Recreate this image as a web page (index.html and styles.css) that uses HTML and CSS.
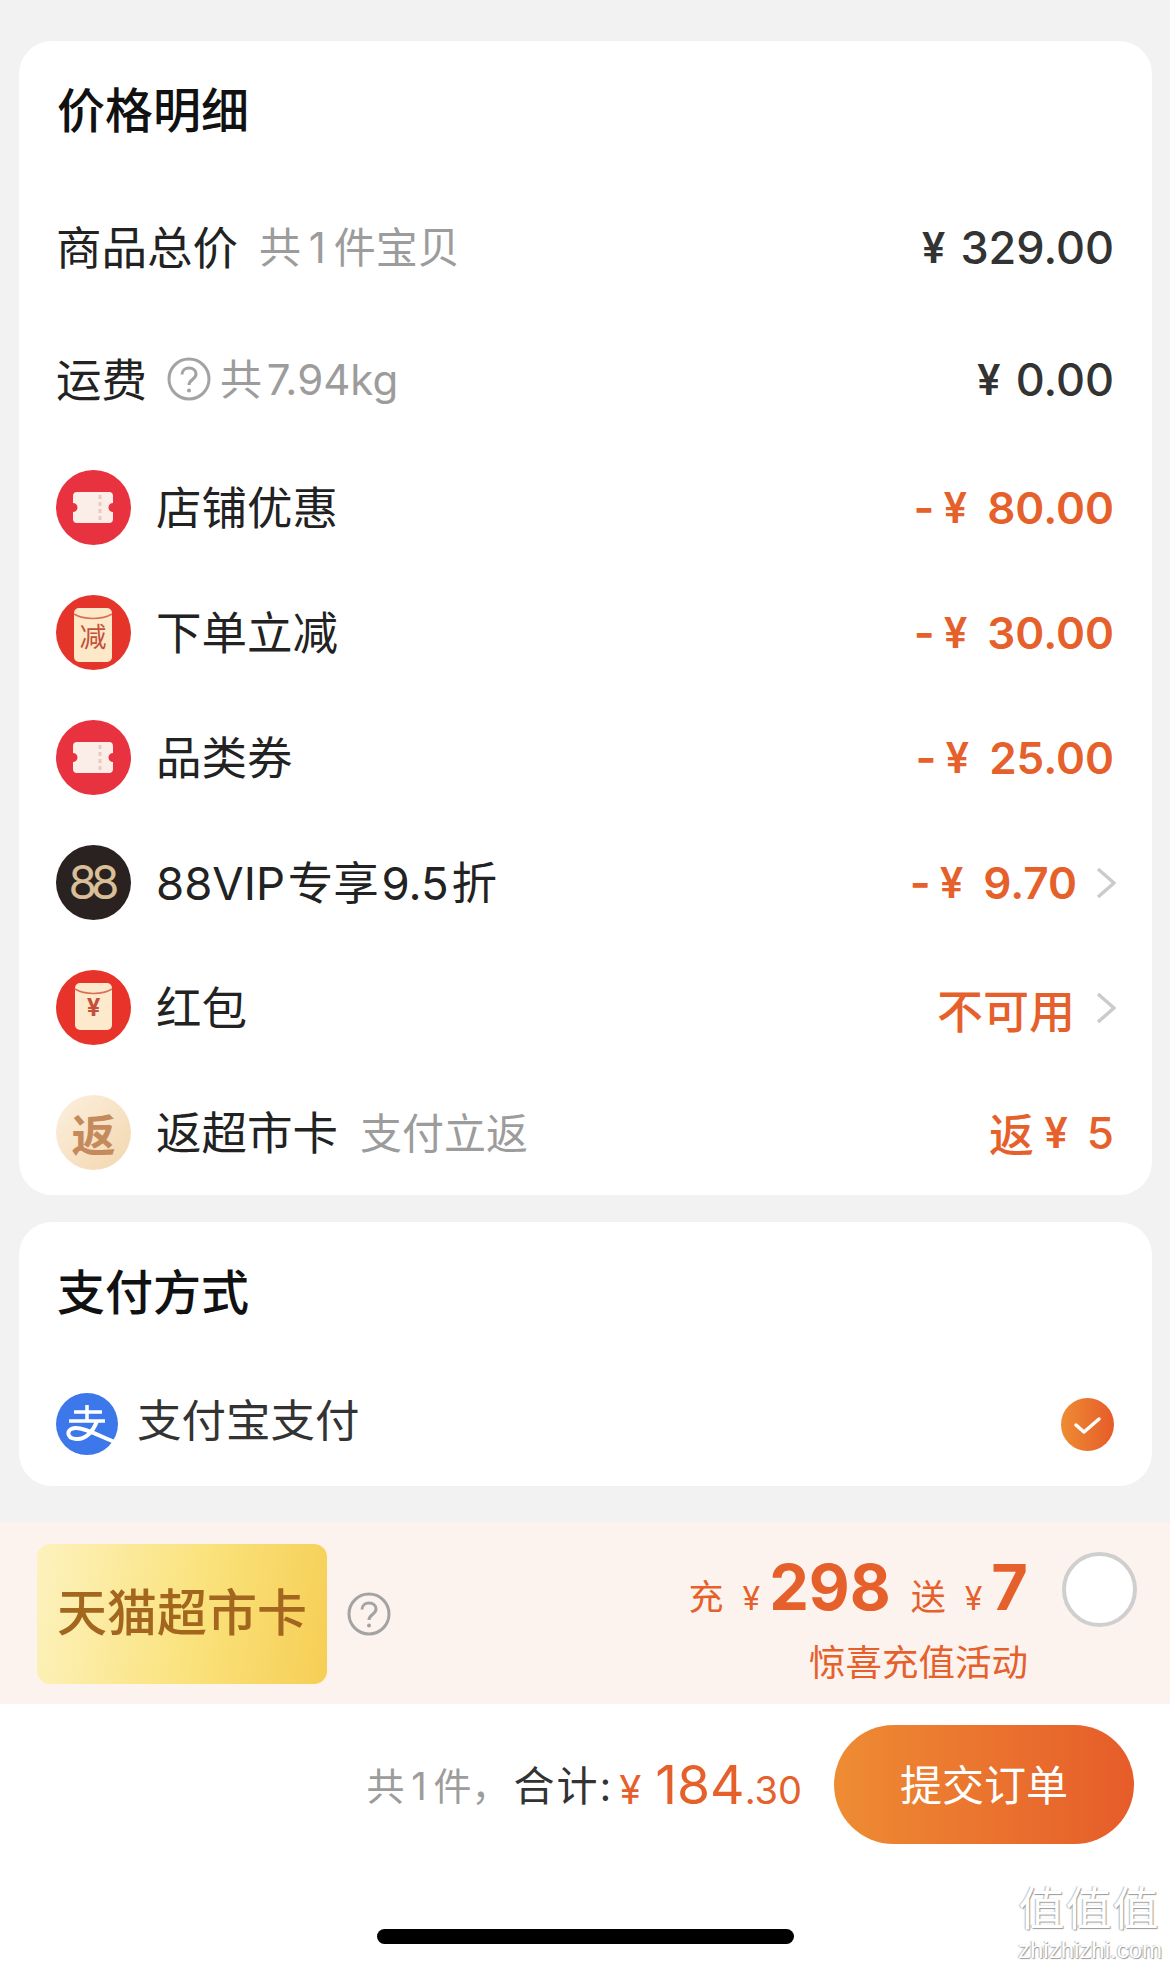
FILE: index.html
```html
<!DOCTYPE html>
<html lang="zh-CN">
<head>
  <meta charset="UTF-8">
  <title>确认订单</title>
  <link rel="stylesheet" href="styles.css">
</head>
<body>

  <section class="card price-card">
    <h2 class="card-title price-title">价格明细</h2>

    <div class="row row-total">
      <div class="row-left">
        <span class="label">商品总价</span>
        <span class="sub sub-total">共 1 件宝贝</span>
      </div>
      <div class="amount"><span class="yen">¥</span>329.00</div>
    </div>

    <div class="row row-fee">
      <div class="row-left">
        <span class="label">运费</span>
        <svg class="help help-fee" viewBox="0 0 44 44">
          <circle cx="22" cy="22" r="20" fill="none" stroke="#a3a3a3" stroke-width="3"/>
          <path d="M15 17.500c0-4 3-6.500 7-6.500s7 2.500 7 6c0 5.500-7 5.500-7 11" fill="none" stroke="#a3a3a3" stroke-width="3"/>
          <circle cx="22" cy="33.500" r="2" fill="#a3a3a3"/>
        </svg>
        <span class="sub sub-fee">共 7.94kg</span>
      </div>
      <div class="amount"><span class="yen">¥</span>0.00</div>
    </div>

    <div class="row">
      <div class="row-left">
        <svg class="icon" viewBox="0 0 75 75">
          <circle cx="37.500" cy="37.500" r="37.500" fill="#e8323f"/>
          <path d="M21 22H53a4 4 0 0 1 4 4V33a4.500 4.500 0 0 0 0 9V49a4 4 0 0 1-4 4H21a4 4 0 0 1-4-4V42a4.500 4.500 0 0 0 0-9V26a4 4 0 0 1 4-4Z" fill="#fbeee8"/>
          <path d="M44 25V51" stroke="#e8cbbd" stroke-width="3" stroke-dasharray="4 3"/>
        </svg>
        <span class="label">店铺优惠</span>
      </div>
      <div class="amount off"><span class="minus">-</span><span class="yen">¥</span><span class="num">80.00</span></div>
    </div>

    <div class="row">
      <div class="row-left">
        <svg class="icon" viewBox="0 0 75 75">
          <circle cx="37.500" cy="37.500" r="37.500" fill="#e5352b"/>
          <rect x="18" y="13" width="38" height="54" rx="5" fill="#fde8c8"/>
          <path d="M18 19c10 6 28 6 38 0" fill="none" stroke="#d9705a" stroke-width="1.500"/>
          <text x="37" y="52" class="icon-char">减</text>
        </svg>
        <span class="label">下单立减</span>
      </div>
      <div class="amount off"><span class="minus">-</span><span class="yen">¥</span><span class="num">30.00</span></div>
    </div>

    <div class="row">
      <div class="row-left">
        <svg class="icon" viewBox="0 0 75 75">
          <circle cx="37.500" cy="37.500" r="37.500" fill="#e8323f"/>
          <path d="M21 22H53a4 4 0 0 1 4 4V33a4.500 4.500 0 0 0 0 9V49a4 4 0 0 1-4 4H21a4 4 0 0 1-4-4V42a4.500 4.500 0 0 0 0-9V26a4 4 0 0 1 4-4Z" fill="#fbeee8"/>
          <path d="M44 25V51" stroke="#e8cbbd" stroke-width="3" stroke-dasharray="4 3"/>
        </svg>
        <span class="label">品类券</span>
      </div>
      <div class="amount off"><span class="minus">-</span><span class="yen">¥</span><span class="num">25.00</span></div>
    </div>

    <div class="row row-arrow">
      <div class="row-left">
        <div class="icon badge-vip">88</div>
        <span class="label label-vip">88VIP 专享 9.5 折</span>
      </div>
      <div class="row-right">
        <div class="amount off"><span class="minus">-</span><span class="yen">¥</span><span class="num">9.70</span></div>
        <svg class="chevron" viewBox="0 0 20 32"><path d="M2 2L18 16L2 30" fill="none" stroke="#cbcbcb" stroke-width="3.500"/></svg>
      </div>
    </div>

    <div class="row row-arrow">
      <div class="row-left">
        <svg class="icon" viewBox="0 0 75 75">
          <circle cx="37.500" cy="37.500" r="37.500" fill="#e8332a"/>
          <rect x="19" y="13" width="37" height="47" rx="5" fill="#fdeacd"/>
          <path d="M19 19c10 6 27 6 37 0" fill="none" stroke="#d9705a" stroke-width="1.500"/>
          <text x="37.500" y="46" class="icon-char icon-yen">¥</text>
        </svg>
        <span class="label">红包</span>
      </div>
      <div class="row-right">
        <div class="amount off text-amount unavailable">不可用</div>
        <svg class="chevron" viewBox="0 0 20 32"><path d="M2 2L18 16L2 30" fill="none" stroke="#cbcbcb" stroke-width="3.500"/></svg>
      </div>
    </div>

    <div class="row">
      <div class="row-left">
        <div class="icon badge-back">返</div>
        <span class="label">返超市卡</span>
        <span class="sub sub-back">支付立返</span>
      </div>
      <div class="amount off text-amount">返<span class="yen yen-back">¥</span><span class="num">5</span></div>
    </div>
  </section>

  <section class="card pay-card">
    <h2 class="card-title pay-title">支付方式</h2>
    <div class="pay-row">
      <svg class="alipay" viewBox="0 0 62 62">
        <circle cx="31" cy="31" r="31" fill="#3d78ea"/>
        <path d="M31 12V27M18 19H46M13 28H49" fill="none" stroke="#fff" stroke-width="3.500"/>
        <path d="M41 28C37 39 29 47 20 46C10 45 10 36 19 35C30 34 48 46 62 50" fill="none" stroke="#fff" stroke-width="4"/>
      </svg>
      <span class="pay-name">支付宝支付</span>
      <svg class="check" viewBox="0 0 53 53">
        <defs>
          <linearGradient id="checkFill">
            <stop offset="0" stop-color="#ee8c33"/>
            <stop offset="1" stop-color="#e65c2a"/>
          </linearGradient>
        </defs>
        <circle cx="26.500" cy="26.500" r="26.500" fill="url(#checkFill)"/>
        <path d="M15 27L23 34L38 21" fill="none" stroke="#fff" stroke-width="3.500" stroke-linecap="round" stroke-linejoin="round"/>
      </svg>
    </div>
  </section>

  <section class="promo">
    <div class="promo-left">
      <div class="gift-card">天猫超市卡</div>
      <svg class="help" viewBox="0 0 44 44">
        <circle cx="22" cy="22" r="20" fill="none" stroke="#a3a3a3" stroke-width="3"/>
        <path d="M15 17.500c0-4 3-6.500 7-6.500s7 2.500 7 6c0 5.500-7 5.500-7 11" fill="none" stroke="#a3a3a3" stroke-width="3"/>
        <circle cx="22" cy="33.500" r="2" fill="#a3a3a3"/>
      </svg>
    </div>
    <div class="promo-right">
      <div class="promo-text">
        <div class="promo-line">
          <span class="promo-small">充</span>
          <span class="promo-yen">¥</span>
          <span class="promo-num">298</span>
          <span class="promo-small promo-gap">送</span>
          <span class="promo-yen">¥</span>
          <span class="promo-num">7</span>
        </div>
        <div class="promo-note">惊喜充值活动</div>
      </div>
      <div class="radio"></div>
    </div>
  </section>

  <footer class="bottom">
    <div class="submit-bar">
      <span class="count">共 1 件，</span>
      <span class="sum-label">合计:</span>
      <span class="sum"><span class="sum-yen">¥</span><span class="sum-int">184</span><span class="sum-dec">.30</span></span>
      <button class="submit">提交订单</button>
    </div>
    <div class="home-bar"></div>
  </footer>

  <div class="watermark">
    <div class="wm-mark">值值值</div>
    <div class="wm-url">zhizhizhi.com</div>
  </div>

</body>
</html>
```

FILE: styles.css
```css
* {
  box-sizing: border-box;
}

html, body {
  height: 1968px;
  overflow: hidden;
}

body {
  position: relative;
  margin: 0;
  padding-top: 41px;
  background-color: #f2f2f2;
  font-family: Inter, "Noto Sans CJK SC", sans-serif;
  color: #222;
}

.card {
  margin: 0 18px 0 19px;
  background-color: #fff;
  border-radius: 33px;
}

.price-card {
  height: 1154px;
}

.pay-card {
  height: 264px;
  margin-top: 27px;
}

.card-title {
  margin: 0;
  padding: 0 0 7px 38px;
  font-size: 48px;
  font-weight: 500;
  color: #111;
  display: flex;
  align-items: center;
}

.price-title {
  height: 138px;
}

.pay-title {
  height: 140px;
}

.row {
  display: flex;
  align-items: center;
  justify-content: space-between;
  height: 125px;
  padding: 0 38px 0 37px;
}

.row-total {
  height: 136px;
}

.row-fee {
  height: 128px;
  margin-bottom: 2px;
}

.row-arrow {
  padding-right: 36px;
}

.row-left,
.row-right {
  display: flex;
  align-items: center;
}

.label {
  margin-top: -5px;
  font-size: 45.5px;
  color: #222;
}

.label-vip {
  word-spacing: -10px;
}

.sub {
  margin-top: -5px;
  font-size: 42px;
  color: #9c9c9c;
  word-spacing: -4px;
}

.sub-total {
  margin-left: 21px;
}

.sub-fee {
  word-spacing: -7px;
}

.sub-back {
  margin-left: 22px;
}

.help {
  width: 44px;
  height: 44px;
  margin-left: 20px;
}

.help-fee {
  margin-left: 20px;
  margin-right: 9px;
}

.icon {
  width: 75px;
  height: 75px;
  margin-right: 25px;
  flex-shrink: 0;
}

.icon-char {
  font-size: 27px;
  fill: #c4503a;
  text-anchor: middle;
}

.icon-yen {
  font-size: 24px;
  font-weight: 700;
}

.badge-vip {
  display: flex;
  align-items: center;
  justify-content: center;
  padding: 0 5px 2px 0;
  border-radius: 50%;
  background-color: #2a2220;
  color: #d9bf98;
  font-size: 46px;
  font-weight: 400;
  letter-spacing: -6px;
}

.badge-back {
  display: flex;
  align-items: center;
  justify-content: center;
  border-radius: 50%;
  background: linear-gradient(135deg, #fcf0df, #f3d6ae);
  color: #c58a5c;
  font-size: 44px;
  font-weight: 700;
}

.amount {
  display: flex;
  align-items: center;
  font-size: 45px;
  font-weight: 500;
  color: #333;
}

.yen {
  margin-right: 15px;
  font-size: 42px;
  font-weight: 600;
}

.off {
  color: #e5602b;
  font-weight: 600;
}

.off .num {
  margin-left: 5px;
  font-size: 44px;
}

.minus {
  margin-right: 9px;
}

.text-amount {
  font-weight: 500;
}

.unavailable {
  margin-right: 2px;
  font-size: 46px;
}

.yen-back {
  margin: 0 14px 0 10px;
}

.chevron {
  width: 20px;
  height: 32px;
  margin-left: 19px;
}

.pay-row {
  display: flex;
  align-items: center;
  margin-top: 25px;
  padding: 0 38px 0 37px;
}

.alipay {
  width: 62px;
  height: 62px;
  margin-right: 19px;
  margin-top: 6px;
}

.pay-name {
  margin-top: -8px;
  font-size: 44.5px;
  color: #333;
}

.check {
  width: 53px;
  height: 53px;
  margin-left: auto;
  margin-top: 6px;
}

.promo {
  display: flex;
  align-items: center;
  justify-content: space-between;
  height: 181px;
  margin-top: 37px;
  padding: 0 33px 0 37px;
  background-color: #fcf3ef;
}

.promo-left,
.promo-right {
  display: flex;
  align-items: center;
}

.gift-card {
  display: flex;
  align-items: center;
  justify-content: center;
  width: 290px;
  height: 140px;
  padding-bottom: 10px;
  border-radius: 13px;
  background: linear-gradient(100deg, #fdf2be, #fae27c 55%, #f6ce55);
  color: #a3661f;
  font-size: 50px;
  font-weight: 500;
}

.promo-text {
  text-align: right;
}

.promo-line {
  display: flex;
  align-items: baseline;
  justify-content: flex-end;
  height: 90px;
  padding-top: 7px;
  color: #e5602b;
}

.promo-small {
  font-size: 35px;
}

.promo-gap {
  margin-left: 20px;
}

.promo-yen {
  margin: 0 9px 0 19px;
  font-size: 32px;
}

.promo-num {
  font-size: 63px;
  font-weight: 700;
  line-height: 78px;
}

.promo-note {
  margin-top: 3px;
  font-size: 36.5px;
  color: #e5602b;
}

.radio {
  width: 75px;
  height: 75px;
  margin: -48px 0 0 34px;
  border: 4px solid #cfcfcf;
  border-radius: 50%;
  background-color: #fff;
}

.bottom {
  height: 264px;
  background-color: #fff;
  padding-top: 21px;
}

.submit-bar {
  display: flex;
  align-items: center;
  justify-content: flex-end;
  padding-right: 36px;
}

.count {
  margin-top: -3px;
  margin-right: 4px;
  font-size: 38px;
  color: #9c9c9c;
  word-spacing: -4px;
}

.sum-label {
  margin-top: -3px;
  font-size: 41px;
  letter-spacing: 2px;
  color: #333;
}

.sum {
  display: flex;
  align-items: baseline;
  color: #e5602b;
}

.sum-yen {
  margin: 0 14px 0 6px;
  font-size: 40px;
}

.sum-int {
  font-size: 53.5px;
}

.sum-dec {
  font-size: 38px;
}

.submit {
  width: 300px;
  height: 119px;
  margin-left: 32px;
  padding: 0 0 5px;
  border: none;
  border-radius: 60px;
  background: linear-gradient(90deg, #ee8c33, #e65c2a);
  color: #fff;
  font-family: inherit;
  font-size: 42px;
}

.home-bar {
  width: 417px;
  height: 15px;
  margin: 85px auto 0;
  border-radius: 8px;
  background-color: #000;
}

.watermark {
  position: absolute;
  right: 10px;
  bottom: 6px;
  width: 142px;
  text-align: center;
  color: #fff;
  font-family: "Liberation Sans", "Noto Sans CJK SC", sans-serif;
}

.wm-mark {
  font-size: 46px;
  line-height: 52px;
  letter-spacing: 1px;
  text-shadow: 1px 1px 1px #999, -1px 0 1px #bbb;
}

.wm-url {
  margin-top: 3px;
  font-size: 24px;
  line-height: 24px;
  white-space: nowrap;
  text-shadow: 1px 1px 1px #999, -1px 0 1px #bbb;
}
```
